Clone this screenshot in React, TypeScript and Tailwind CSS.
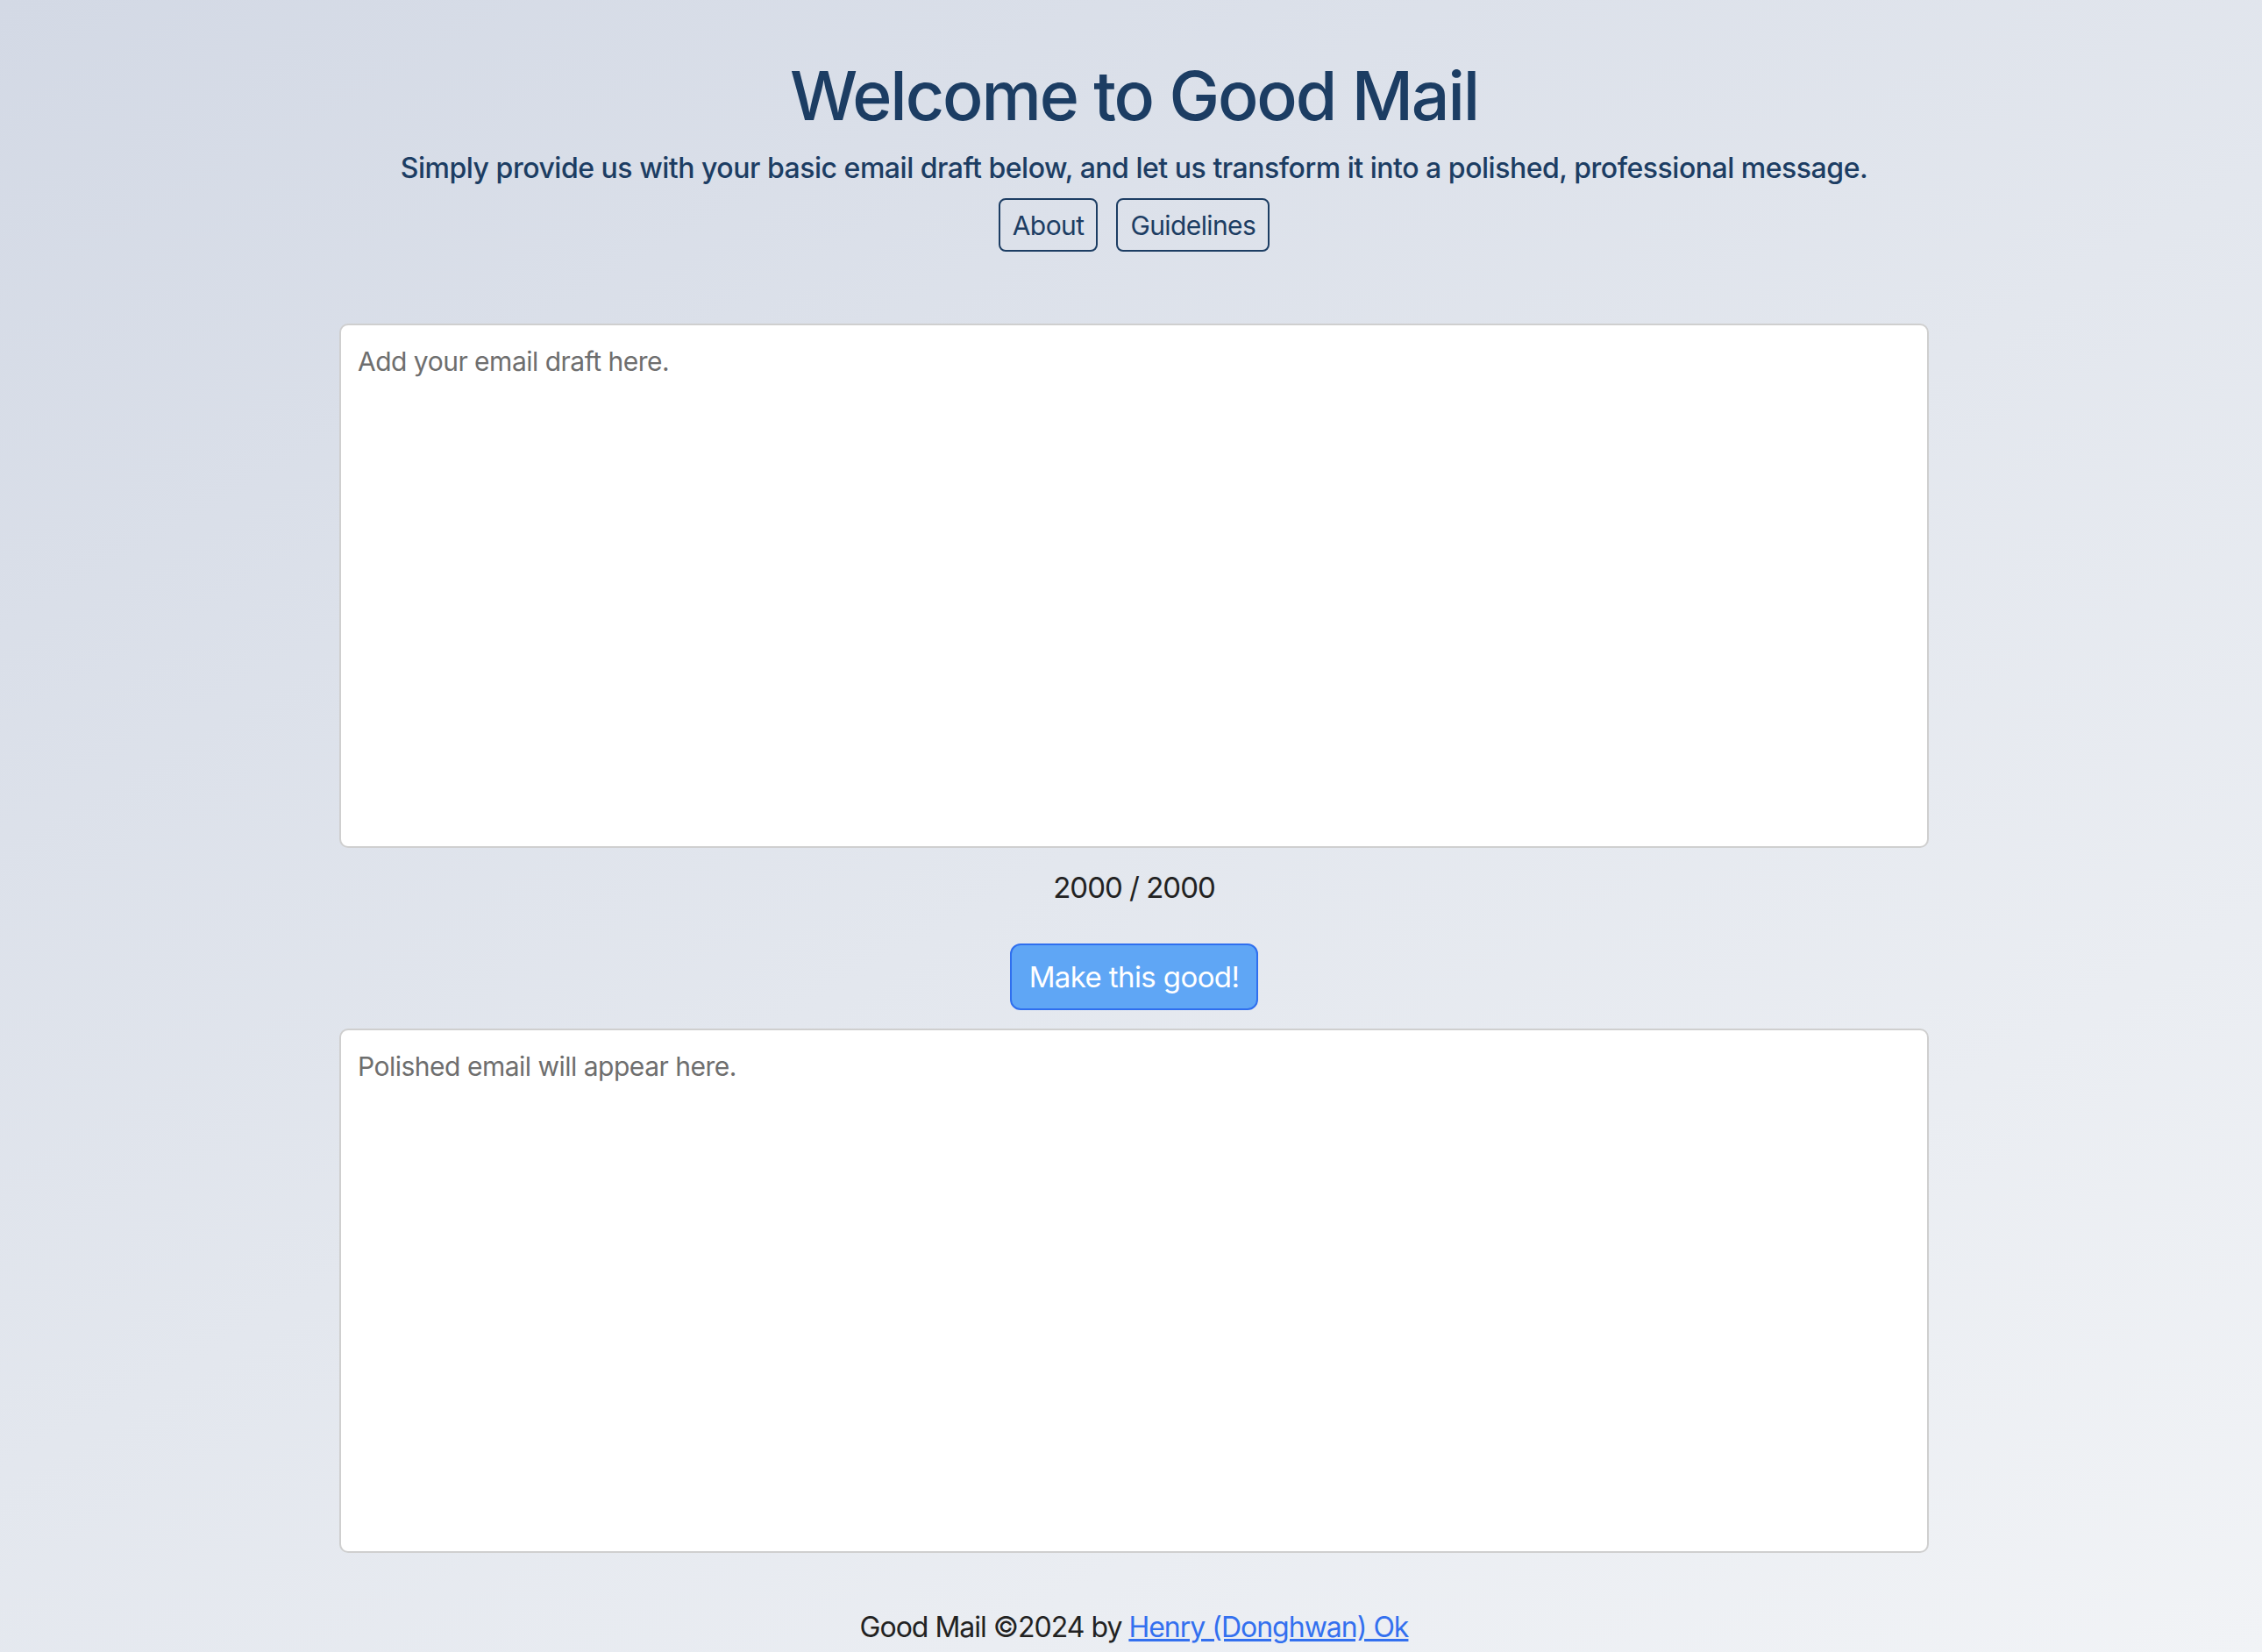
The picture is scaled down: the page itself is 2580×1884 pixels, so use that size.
const font = { fontFamily: "Inter, 'Noto Sans', sans-serif" };

const App = () => {
  return (
    <div
      className="min-h-[1884px] w-full bg-[linear-gradient(150deg,#d3d9e5_0%,#e3e7ee_50%,#f1f3f6_100%)] pl-[7px] text-[#222]"
      style={font}
    >
      <div className="mx-auto flex w-[1813px] flex-col items-center pt-[63px]">
        <h1 className="text-[77px] font-medium leading-[92px] tracking-[-2.1px] text-[#1c3d63]">
          Welcome to Good Mail
        </h1>
        <p className="mt-[17px] text-[32px] font-medium leading-[40px] tracking-[-0.48px] text-[#1c3d63]">
          Simply provide us with your basic email draft below, and let us transform it into a polished, professional
          message.
        </p>
        <div className="mt-[14px] flex gap-[21px]">
          <NavButton label="About" />
          <NavButton label="Guidelines" />
        </div>

        <textarea
          className="mt-[82px] h-[598px] w-full resize-none rounded-[10px] border-2 border-[#cfcfcf] bg-white px-[19px] py-[19px] text-[30px] leading-[45px] tracking-[-0.5px] outline-none placeholder:text-[#6e6e6e]"
          placeholder="Add your email draft here."
        />
        <p className="mt-[25px] text-[33px] leading-[40px] tracking-[-1px] text-[#222]">2000 / 2000</p>
        <button className="mt-[44px] h-[76px] rounded-[12px] border-2 border-[#2f6fef] bg-[#5fa6f5] px-[20px] text-[33px] leading-[40px] tracking-[-0.6px] text-white">
          Make this good!
        </button>
        <textarea
          className="mt-[21px] h-[598px] w-full resize-none rounded-[10px] border-2 border-[#cfcfcf] bg-white px-[19px] py-[19px] text-[30px] leading-[45px] tracking-[-0.5px] outline-none placeholder:text-[#6e6e6e]"
          placeholder="Polished email will appear here."
          readOnly
        />
        <footer className="mt-[65px] pb-[8px] text-[32px] leading-[40px] tracking-[-1px] text-[#222]">
          Good Mail ©2024 by{" "}
          <a href="#" className="text-[#3370ef] underline">
            Henry (Donghwan) Ok
          </a>
        </footer>
      </div>
    </div>
  );
};

type NavButtonProps = {
  label: string;
};
const NavButton = ({ label }: NavButtonProps) => {
  return (
    <button className="h-[61px] rounded-[8px] border-2 border-[#1c3d63] px-[14px] text-[30px] leading-[40px] tracking-[-0.6px] text-[#1c3d63]">
      {label}
    </button>
  );
};

export default App;
